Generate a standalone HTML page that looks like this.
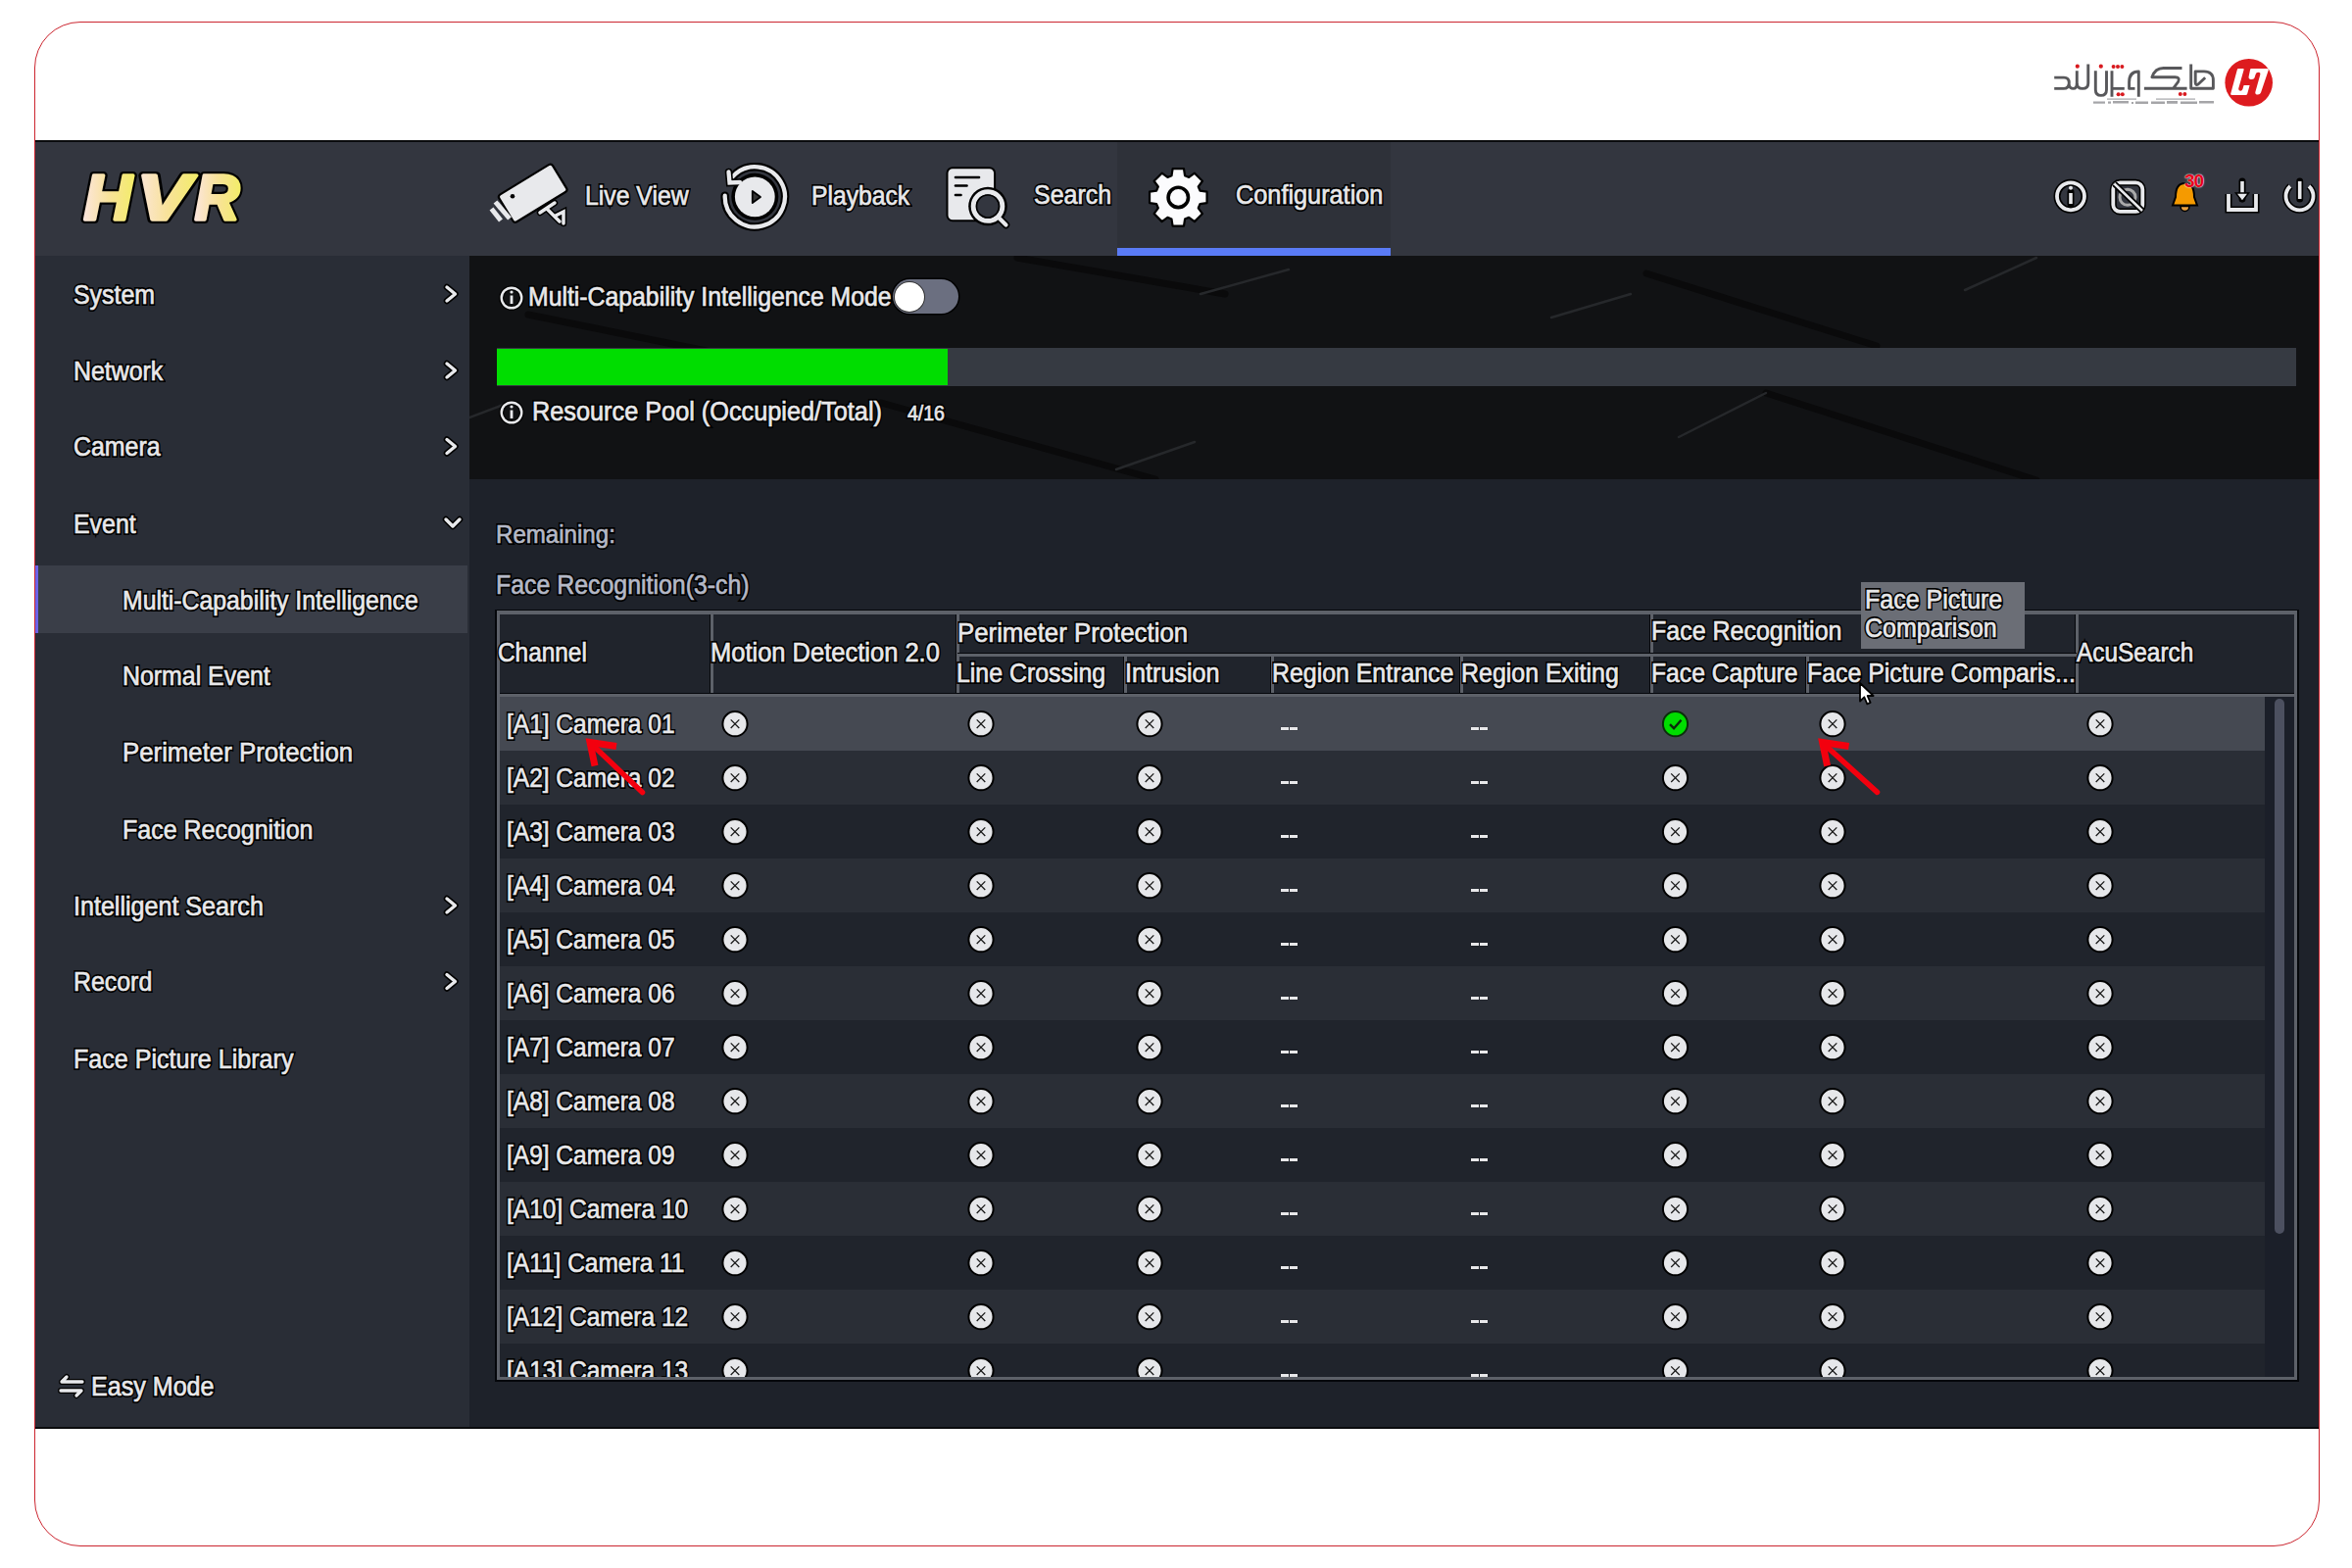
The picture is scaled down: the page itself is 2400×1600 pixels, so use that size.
<!DOCTYPE html><html><head><meta charset="utf-8"><style>
*{margin:0;padding:0;box-sizing:border-box}
html,body{width:2400px;height:1600px;overflow:hidden;background:#fff;font-family:"Liberation Sans",sans-serif}
.a{position:absolute}
.t{position:absolute;white-space:pre;line-height:1;transform:scaleX(0.907);transform-origin:0 0;}
.o{color:#000;-webkit-text-stroke:4px #000}
svg{position:absolute;overflow:visible}
</style></head><body>
<div class="a" style="left:35px;top:143px;width:2331px;height:1315px;background:#0a0b0d;"></div>
<div class="a" style="left:35px;top:145px;width:2331px;height:116px;background:#33363f;"></div>
<div class="a" style="left:35px;top:261px;width:444px;height:1195px;background:#292d36;"></div>
<div class="a" style="left:1140px;top:145px;width:279px;height:108px;background:#2e3139;"></div>
<div class="a" style="left:1140px;top:253px;width:279px;height:8px;background:#5a7bf6;"></div>
<div class="a" style="left:479px;top:261px;width:1887px;height:1195px;background:#1e222a;"></div>
<div class="a" style="left:479px;top:261px;width:1887px;height:228px;background:#111214;overflow:hidden"><svg width="1887" height="228" style="left:0;top:0"><g stroke="#0a0a0b" stroke-width="7" fill="none" stroke-linecap="round"><line x1="559" y1="2" x2="771" y2="39"/><line x1="1201" y1="18" x2="1436" y2="92"/><line x1="1323" y1="140" x2="1599" y2="229"/><line x1="60" y1="60" x2="330" y2="115"/><line x1="420" y1="150" x2="700" y2="228"/></g><g stroke="#26282b" stroke-width="2.5" fill="none" stroke-linecap="round"><line x1="746" y1="39" x2="836" y2="14"/><line x1="1104" y1="63" x2="1185" y2="39"/><line x1="1526" y1="35" x2="1599" y2="2"/><line x1="1234" y1="185" x2="1323" y2="140"/><line x1="0" y1="165" x2="40" y2="150"/><line x1="660" y1="218" x2="740" y2="190"/></g></svg></div>
<svg width="200" height="80" style="left:70px;top:160px" viewBox="70 160 200 80">
<defs><linearGradient id="g1" x1="0" x2="1" y1="0" y2="0"><stop offset="0" stop-color="#fce6dc"/><stop offset="0.5" stop-color="#f8e29a"/><stop offset="1" stop-color="#f3ec6a"/></linearGradient></defs>
<g font-family="Liberation Sans" font-weight="bold" font-style="italic" font-size="64">
<g stroke="#000" stroke-width="8" stroke-linejoin="round" fill="#000">
<text x="85.5" y="224" textLength="49" lengthAdjust="spacingAndGlyphs">H</text><text x="139.5" y="224" textLength="55" lengthAdjust="spacingAndGlyphs">V</text><text x="198.8" y="224" textLength="45.5" lengthAdjust="spacingAndGlyphs">R</text></g>
<g stroke="url(#g1)" stroke-width="3.5" stroke-linejoin="round" fill="url(#g1)">
<text x="85.5" y="224" textLength="49" lengthAdjust="spacingAndGlyphs">H</text><text x="139.5" y="224" textLength="55" lengthAdjust="spacingAndGlyphs">V</text><text x="198.8" y="224" textLength="45.5" lengthAdjust="spacingAndGlyphs">R</text></g>
</g></svg>
<svg width="100" height="80" style="left:490px;top:160px" viewBox="490 160 100 80">
<g stroke="#000" stroke-width="2.2" stroke-linejoin="round">
<g transform="rotate(-31.4 543.7 197.2)"><rect x="511.7" y="180.9" width="64" height="32.6" rx="3" fill="#e8e9ec"/></g>
<line x1="505.5" y1="206" x2="520" y2="223" stroke="#e8e9ec" stroke-width="5"/>
<line x1="501.5" y1="213" x2="511" y2="225" stroke="#e8e9ec" stroke-width="5"/>
</g>
<path d="M566 207 L551 217 M558 213 L571 226 M567 220 L575 216 L575 228" stroke="#000" stroke-width="6.5" fill="none" stroke-linecap="round"/>
<path d="M566 207 L551 217 M558 213 L571 226 M567 220 L575 216 L575 228" stroke="#e8e9ec" stroke-width="3.5" fill="none" stroke-linecap="round"/>
<circle cx="523" cy="200.3" r="2.3" fill="#000"/>
</svg>
<div class="t o" style="left:597.2px;top:185.5px;font-size:27.34px;">Live View</div><div class="t" style="left:597.2px;top:185.5px;font-size:27.34px;color:#e8e8ea;-webkit-text-stroke:0.7px #e8e8ea">Live View</div>
<svg width="80" height="80" style="left:730px;top:160px" viewBox="730 160 80 80">
<circle cx="770.3" cy="200.8" r="24" fill="#000"/>
<path d="M747.56 180.32 A30.6 30.6 0 1 1 739.72 199.73" fill="none" stroke="#000" stroke-width="8.5" stroke-linecap="round"/>
<path d="M747.56 180.32 A30.6 30.6 0 1 1 739.72 199.73" fill="none" stroke="#e8e9ec" stroke-width="4.3" stroke-linecap="round"/>
<path d="M743.5 175.5 L744.5 186.5 L755 186" fill="none" stroke="#000" stroke-width="7.5" stroke-linejoin="miter" stroke-linecap="round"/>
<path d="M743.5 175.5 L744.5 186.5 L755 186" fill="none" stroke="#e8e9ec" stroke-width="4.3" stroke-linejoin="miter" stroke-linecap="round"/>
<circle cx="770.3" cy="200.8" r="20.4" fill="#e8e9ec"/>
<path d="M767.8 195 L767.8 207 L776 201 Z" fill="#333" stroke="#000" stroke-width="1.8" stroke-linejoin="round"/>
</svg>
<div class="t o" style="left:828.2px;top:185.5px;font-size:27.23px;">Playback</div><div class="t" style="left:828.2px;top:185.5px;font-size:27.23px;color:#e8e8ea;-webkit-text-stroke:0.7px #e8e8ea">Playback</div>
<svg width="80" height="80" style="left:960px;top:160px" viewBox="960 160 80 80">
<rect x="966.5" y="171.2" width="48.6" height="54" rx="5.5" fill="#e8e9ec" stroke="#000" stroke-width="2"/>
<g stroke="#000" stroke-width="2.6" stroke-linecap="round"><line x1="975" y1="181" x2="999" y2="181"/><line x1="975" y1="189.5" x2="986.5" y2="189.5"/><line x1="975" y1="199" x2="980.5" y2="199"/></g>
<circle cx="1008" cy="210.5" r="19.8" fill="#000"/>
<line x1="1019" y1="222" x2="1026.5" y2="229.5" stroke="#000" stroke-width="7.5" stroke-linecap="round"/>
<line x1="1019" y1="222" x2="1026.5" y2="229.5" stroke="#e8e9ec" stroke-width="4.2" stroke-linecap="round"/>
<circle cx="1008" cy="210.5" r="14.8" fill="#33363f" stroke="#e8e9ec" stroke-width="5"/>
<circle cx="1008" cy="210.5" r="11.5" fill="none" stroke="#000" stroke-width="1.6"/>
</svg>
<div class="t o" style="left:1055.2px;top:185.3px;font-size:27.56px;">Search</div><div class="t" style="left:1055.2px;top:185.3px;font-size:27.56px;color:#e8e8ea;-webkit-text-stroke:0.7px #e8e8ea">Search</div>
<svg width="80" height="80" style="left:1162px;top:161px" viewBox="1162 161 80 80">
<polygon points="1195.52,179.21 1196.61,172.15 1207.99,172.15 1209.08,179.21 1213.19,180.92 1218.96,176.69 1227.01,184.74 1222.78,190.51 1224.49,194.62 1231.55,195.71 1231.55,207.09 1224.49,208.18 1222.78,212.29 1227.01,218.06 1218.96,226.11 1213.19,221.88 1209.08,223.59 1207.99,230.65 1196.61,230.65 1195.52,223.59 1191.41,221.88 1185.64,226.11 1177.59,218.06 1181.82,212.29 1180.11,208.18 1173.05,207.09 1173.05,195.71 1180.11,194.62 1181.82,190.51 1177.59,184.74 1185.64,176.69 1191.41,180.92" fill="#fbfbfd" stroke="#000" stroke-width="2.2" stroke-linejoin="round"/>
<circle cx="1202.3" cy="201.4" r="10.2" fill="#fbfbfd" stroke="#000" stroke-width="3.6"/>
</svg>
<div class="t o" style="left:1260.7px;top:185.0px;font-size:27.89px;">Configuration</div><div class="t" style="left:1260.7px;top:185.0px;font-size:27.89px;color:#e8e8ea;-webkit-text-stroke:0.7px #e8e8ea">Configuration</div>
<svg width="260" height="60" style="left:2090px;top:170px" viewBox="2090 170 260 60">
<g fill="none" stroke="#000" stroke-width="7">
<circle cx="2113" cy="200.3" r="14"/>
<rect x="2156.3" y="186.3" width="30" height="29.6" rx="7"/>
<path d="M2274 198 V214 H2302 V198"/>
<path d="M2337 190 A14 14 0 1 0 2356 190"/>
</g>
<g fill="none" stroke="#e8e9ec" stroke-width="3.8">
<circle cx="2113" cy="200.3" r="14"/>
<rect x="2156.3" y="186.3" width="30" height="29.6" rx="7"/>
<path d="M2274 198 V214 H2302 V198"/>
<path d="M2337 190 A14 14 0 1 0 2356 190"/>
</g>
<g stroke="#000" stroke-width="7" stroke-linecap="round"><line x1="2113" y1="196" x2="2113" y2="208"/><line x1="2346.7" y1="185" x2="2346.7" y2="203"/><line x1="2288" y1="185" x2="2288" y2="203"/></g>
<g stroke="#e8e9ec" stroke-width="3.6" stroke-linecap="butt"><line x1="2113" y1="197" x2="2113" y2="208"/><line x1="2346.7" y1="185" x2="2346.7" y2="203"/><line x1="2288" y1="185" x2="2288" y2="200"/></g>
<circle cx="2113" cy="191.8" r="2" fill="#e8e9ec"/>
<path d="M2281.5 197 L2288 205.5 L2294.5 197 Z" fill="#e8e9ec" stroke="#000" stroke-width="1.5"/>
<circle cx="2171" cy="201.3" r="8" fill="none" stroke="#aaa" stroke-width="3"/>
<line x1="2157.5" y1="187.5" x2="2186" y2="215" stroke="#000" stroke-width="6"/>
<line x1="2157.5" y1="187.5" x2="2186" y2="215" stroke="#e8e9ec" stroke-width="2.5"/>
<path d="M2229.5 187 C2222 187 2220 194 2220 201 L2217 209.5 L2242 209.5 L2239 201 C2239 194 2237 187 2229.5 187 Z" fill="#f59a00" stroke="#000" stroke-width="2"/>
<path d="M2225 210.5 A4.5 5 0 0 0 2234 210.5 Z" fill="#e9a040" stroke="#000" stroke-width="1.5"/>
</svg>
<div class="a" style="left:2229px;top:175px;font:bold 19px/1 'Liberation Sans',sans-serif;color:#e8001a;letter-spacing:-1px;text-shadow:0 0 2px #fff,0 0 1px #fff">30</div>
<div class="a" style="left:35px;top:577px;width:442px;height:69px;background:#3a3e48;"></div>
<div class="a" style="left:35px;top:577px;width:4px;height:69px;background:#6b62e8;"></div>
<div class="t o" style="left:75.3px;top:286.8px;font-size:27.45px;">System</div><div class="t" style="left:75.3px;top:286.8px;font-size:27.45px;color:#e8e8ea;-webkit-text-stroke:0.7px #e8e8ea">System</div>
<div class="t o" style="left:75.3px;top:364.8px;font-size:27.45px;">Network</div><div class="t" style="left:75.3px;top:364.8px;font-size:27.45px;color:#e8e8ea;-webkit-text-stroke:0.7px #e8e8ea">Network</div>
<div class="t o" style="left:75.3px;top:442.3px;font-size:27.45px;">Camera</div><div class="t" style="left:75.3px;top:442.3px;font-size:27.45px;color:#e8e8ea;-webkit-text-stroke:0.7px #e8e8ea">Camera</div>
<div class="t o" style="left:75.3px;top:520.8px;font-size:27.45px;">Event</div><div class="t" style="left:75.3px;top:520.8px;font-size:27.45px;color:#e8e8ea;-webkit-text-stroke:0.7px #e8e8ea">Event</div>
<div class="t o" style="left:125.0px;top:598.5px;font-size:27.34px;">Multi-Capability Intelligence</div><div class="t" style="left:125.0px;top:598.5px;font-size:27.34px;color:#e8e8ea;-webkit-text-stroke:0.7px #e8e8ea">Multi-Capability Intelligence</div>
<div class="t o" style="left:125.0px;top:676.3px;font-size:27.45px;">Normal Event</div><div class="t" style="left:125.0px;top:676.3px;font-size:27.45px;color:#e8e8ea;-webkit-text-stroke:0.7px #e8e8ea">Normal Event</div>
<div class="t o" style="left:125.0px;top:753.4px;font-size:28.45px;">Perimeter Protection</div><div class="t" style="left:125.0px;top:753.4px;font-size:28.45px;color:#e8e8ea;-webkit-text-stroke:0.7px #e8e8ea">Perimeter Protection</div>
<div class="t o" style="left:125.0px;top:832.7px;font-size:27.56px;">Face Recognition</div><div class="t" style="left:125.0px;top:832.7px;font-size:27.56px;color:#e8e8ea;-webkit-text-stroke:0.7px #e8e8ea">Face Recognition</div>
<div class="t o" style="left:75.3px;top:910.6px;font-size:27.67px;">Intelligent Search</div><div class="t" style="left:75.3px;top:910.6px;font-size:27.67px;color:#e8e8ea;-webkit-text-stroke:0.7px #e8e8ea">Intelligent Search</div>
<div class="t o" style="left:75.3px;top:988.3px;font-size:27.45px;">Record</div><div class="t" style="left:75.3px;top:988.3px;font-size:27.45px;color:#e8e8ea;-webkit-text-stroke:0.7px #e8e8ea">Record</div>
<div class="t o" style="left:75.3px;top:1066.6px;font-size:27.67px;">Face Picture Library</div><div class="t" style="left:75.3px;top:1066.6px;font-size:27.67px;color:#e8e8ea;-webkit-text-stroke:0.7px #e8e8ea">Face Picture Library</div>
<svg width="30" height="1100" style="left:440px;top:0;" viewBox="440 0 30 1100"><g fill="none" stroke="#000" stroke-width="6.5" stroke-linecap="round" stroke-linejoin="round"><path d="M456 293 L464.5 300 L456 307"/><path d="M456 371 L464.5 378 L456 385"/><path d="M456 448.5 L464.5 455.5 L456 462.5"/><path d="M455 530 L462 537 L469 530"/><path d="M456 917 L464.5 924 L456 931"/><path d="M456 994.5 L464.5 1001.5 L456 1008.5"/></g><g fill="none" stroke="#e8e9ec" stroke-width="3.4" stroke-linecap="round" stroke-linejoin="round"><path d="M456 293 L464.5 300 L456 307"/><path d="M456 371 L464.5 378 L456 385"/><path d="M456 448.5 L464.5 455.5 L456 462.5"/><path d="M455 530 L462 537 L469 530"/><path d="M456 917 L464.5 924 L456 931"/><path d="M456 994.5 L464.5 1001.5 L456 1008.5"/></g></svg>
<svg width="40" height="30" style="left:55px;top:1400px" viewBox="55 1400 40 30">
<g fill="none" stroke="#000" stroke-width="6" stroke-linecap="round" stroke-linejoin="round"><path d="M84 1410 H63 L68 1405"/><path d="M62 1419 H83 L78 1424"/></g>
<g fill="none" stroke="#e8e9ec" stroke-width="3.3" stroke-linecap="round" stroke-linejoin="round"><path d="M84 1410 H63 L68 1405"/><path d="M62 1419 H83 L78 1424"/></g>
</svg>
<div class="t o" style="left:92.7px;top:1401.0px;font-size:27.67px;">Easy Mode</div><div class="t" style="left:92.7px;top:1401.0px;font-size:27.67px;color:#e8e8ea;-webkit-text-stroke:0.7px #e8e8ea">Easy Mode</div>
<svg width="30" height="30" style="left:507.29999999999995px;top:288.5px" viewBox="507.29999999999995 288.5 30 30"><circle cx="522.3" cy="303.5" r="10.3" fill="none" stroke="#000" stroke-width="5"/><circle cx="522.3" cy="303.5" r="10.3" fill="none" stroke="#e8e9ec" stroke-width="2.4"/><rect x="520.9" y="301.0" width="2.8" height="8.5" fill="#e8e9ec"/><circle cx="522.3" cy="297.5" r="1.6" fill="#e8e9ec"/></svg>
<div class="t o" style="left:539.2px;top:289.3px;font-size:27.34px;">Multi-Capability Intelligence Mode</div><div class="t" style="left:539.2px;top:289.3px;font-size:27.34px;color:#e8e8ea;-webkit-text-stroke:0.7px #e8e8ea">Multi-Capability Intelligence Mode</div>
<div class="a" style="left:911px;top:285px;width:67px;height:35px;border-radius:18px;background:#6b6f80;box-shadow:0 0 0 1.5px #000"></div>
<div class="a" style="left:913px;top:288px;width:30px;height:30px;border-radius:15px;background:#fff;box-shadow:0 0 0 1px #333"></div>
<div class="a" style="left:507px;top:355px;width:1836px;height:39px;background:#363a42;"></div>
<div class="a" style="left:507px;top:356px;width:460px;height:37px;background:#00dd00;"></div>
<svg width="30" height="30" style="left:507.29999999999995px;top:405.8px" viewBox="507.29999999999995 405.8 30 30"><circle cx="522.3" cy="420.8" r="10.3" fill="none" stroke="#000" stroke-width="5"/><circle cx="522.3" cy="420.8" r="10.3" fill="none" stroke="#e8e9ec" stroke-width="2.4"/><rect x="520.9" y="418.3" width="2.8" height="8.5" fill="#e8e9ec"/><circle cx="522.3" cy="414.8" r="1.6" fill="#e8e9ec"/></svg>
<div class="t o" style="left:543.2px;top:406.1px;font-size:27.89px;">Resource Pool (Occupied/Total)</div><div class="t" style="left:543.2px;top:406.1px;font-size:27.89px;color:#e8e8ea;-webkit-text-stroke:0.7px #e8e8ea">Resource Pool (Occupied/Total)</div>
<div class="t o" style="left:926.0px;top:411.5px;font-size:21.50px;">4/16</div><div class="t" style="left:926.0px;top:411.5px;font-size:21.50px;color:#e8e8ea;-webkit-text-stroke:0.7px #e8e8ea">4/16</div>
<div class="t o" style="left:506.2px;top:531.9px;font-size:26.57px;">Remaining:</div><div class="t" style="left:506.2px;top:531.9px;font-size:26.57px;color:#b4b8c6;-webkit-text-stroke:0.7px #b4b8c6">Remaining:</div>
<div class="t o" style="left:506.2px;top:583.3px;font-size:27.45px;">Face Recognition(3-ch)</div><div class="t" style="left:506.2px;top:583.3px;font-size:27.45px;color:#b4b8c6;-webkit-text-stroke:0.7px #b4b8c6">Face Recognition(3-ch)</div>
<div class="a" style="left:505px;top:622px;width:1841px;height:788px;background:#05070b;"></div>
<div class="a" style="left:507px;top:623px;width:1837px;height:785px;background:#5d6169;"></div>
<div class="a" style="left:510px;top:627px;width:1831px;height:778px;background:#20242c;"></div>
<div class="a" style="left:724px;top:627px;width:4px;height:84px;background:#05070b;"></div>
<div class="a" style="left:725px;top:627px;width:2.5px;height:84px;background:#5d6169;"></div>
<div class="a" style="left:975px;top:627px;width:4px;height:84px;background:#05070b;"></div>
<div class="a" style="left:976px;top:627px;width:2.5px;height:84px;background:#5d6169;"></div>
<div class="a" style="left:1683px;top:627px;width:4px;height:84px;background:#05070b;"></div>
<div class="a" style="left:1684px;top:627px;width:2.5px;height:84px;background:#5d6169;"></div>
<div class="a" style="left:2117px;top:627px;width:4px;height:84px;background:#05070b;"></div>
<div class="a" style="left:2118px;top:627px;width:2.5px;height:84px;background:#5d6169;"></div>
<div class="a" style="left:1146px;top:667px;width:4px;height:44px;background:#05070b;"></div>
<div class="a" style="left:1147px;top:667px;width:2.5px;height:44px;background:#5d6169;"></div>
<div class="a" style="left:1296px;top:667px;width:4px;height:44px;background:#05070b;"></div>
<div class="a" style="left:1297px;top:667px;width:2.5px;height:44px;background:#5d6169;"></div>
<div class="a" style="left:1489px;top:667px;width:4px;height:44px;background:#05070b;"></div>
<div class="a" style="left:1490px;top:667px;width:2.5px;height:44px;background:#5d6169;"></div>
<div class="a" style="left:1842px;top:667px;width:4px;height:44px;background:#05070b;"></div>
<div class="a" style="left:1843px;top:667px;width:2.5px;height:44px;background:#5d6169;"></div>
<div class="a" style="left:977px;top:666px;width:1142px;height:4px;background:#05070b;"></div>
<div class="a" style="left:977px;top:667px;width:1142px;height:2.5px;background:#5d6169;"></div>
<div class="a" style="left:510px;top:707px;width:1831px;height:5px;background:#05070b;"></div>
<div class="a" style="left:510px;top:708px;width:1831px;height:3px;background:#5d6169;"></div>
<div class="t o" style="left:508.2px;top:653.4px;font-size:26.90px;">Channel</div><div class="t" style="left:508.2px;top:653.4px;font-size:26.90px;color:#e8e8ea;-webkit-text-stroke:0.7px #e8e8ea">Channel</div>
<div class="t o" style="left:724.7px;top:652.4px;font-size:28.11px;">Motion Detection 2.0</div><div class="t" style="left:724.7px;top:652.4px;font-size:28.11px;color:#e8e8ea;-webkit-text-stroke:0.7px #e8e8ea">Motion Detection 2.0</div>
<div class="t o" style="left:976.7px;top:630.6px;font-size:28.45px;">Perimeter Protection</div><div class="t" style="left:976.7px;top:630.6px;font-size:28.45px;color:#e8e8ea;-webkit-text-stroke:0.7px #e8e8ea">Perimeter Protection</div>
<div class="t o" style="left:975.7px;top:673.3px;font-size:27.45px;">Line Crossing</div><div class="t" style="left:975.7px;top:673.3px;font-size:27.45px;color:#e8e8ea;-webkit-text-stroke:0.7px #e8e8ea">Line Crossing</div>
<div class="t o" style="left:1148.2px;top:673.0px;font-size:27.78px;">Intrusion</div><div class="t" style="left:1148.2px;top:673.0px;font-size:27.78px;color:#e8e8ea;-webkit-text-stroke:0.7px #e8e8ea">Intrusion</div>
<div class="t o" style="left:1298.2px;top:673.3px;font-size:27.45px;">Region Entrance</div><div class="t" style="left:1298.2px;top:673.3px;font-size:27.45px;color:#e8e8ea;-webkit-text-stroke:0.7px #e8e8ea">Region Entrance</div>
<div class="t o" style="left:1490.7px;top:673.2px;font-size:27.51px;">Region Exiting</div><div class="t" style="left:1490.7px;top:673.2px;font-size:27.51px;color:#e8e8ea;-webkit-text-stroke:0.7px #e8e8ea">Region Exiting</div>
<div class="t o" style="left:1685.2px;top:630.2px;font-size:27.56px;">Face Recognition</div><div class="t" style="left:1685.2px;top:630.2px;font-size:27.56px;color:#e8e8ea;-webkit-text-stroke:0.7px #e8e8ea">Face Recognition</div>
<div class="t o" style="left:1685.2px;top:673.4px;font-size:27.23px;">Face Capture</div><div class="t" style="left:1685.2px;top:673.4px;font-size:27.23px;color:#e8e8ea;-webkit-text-stroke:0.7px #e8e8ea">Face Capture</div>
<div class="t o" style="left:1844.2px;top:673.3px;font-size:27.45px;">Face Picture Comparis...</div><div class="t" style="left:1844.2px;top:673.3px;font-size:27.45px;color:#e8e8ea;-webkit-text-stroke:0.7px #e8e8ea">Face Picture Comparis...</div>
<div class="t o" style="left:2118.7px;top:653.4px;font-size:26.90px;">AcuSearch</div><div class="t" style="left:2118.7px;top:653.4px;font-size:26.90px;color:#e8e8ea;-webkit-text-stroke:0.7px #e8e8ea">AcuSearch</div>
<div class="a" style="left:510px;top:711px;width:1801px;height:55px;background:#454952;"></div>
<div class="a" style="left:510px;top:766px;width:1801px;height:55px;background:#2a2e36;"></div>
<div class="a" style="left:510px;top:821px;width:1801px;height:55px;background:#20242c;"></div>
<div class="a" style="left:510px;top:876px;width:1801px;height:55px;background:#2a2e36;"></div>
<div class="a" style="left:510px;top:931px;width:1801px;height:55px;background:#20242c;"></div>
<div class="a" style="left:510px;top:986px;width:1801px;height:55px;background:#2a2e36;"></div>
<div class="a" style="left:510px;top:1041px;width:1801px;height:55px;background:#20242c;"></div>
<div class="a" style="left:510px;top:1096px;width:1801px;height:55px;background:#2a2e36;"></div>
<div class="a" style="left:510px;top:1151px;width:1801px;height:55px;background:#20242c;"></div>
<div class="a" style="left:510px;top:1206px;width:1801px;height:55px;background:#2a2e36;"></div>
<div class="a" style="left:510px;top:1261px;width:1801px;height:55px;background:#20242c;"></div>
<div class="a" style="left:510px;top:1316px;width:1801px;height:55px;background:#2a2e36;"></div>
<div class="a" style="left:510px;top:1371px;width:1801px;height:34px;background:#20242c;"></div>
<div class="a" style="left:510px;top:711px;width:1801px;height:55px;overflow:hidden"><div class="t o" style="left:6.5px;top:14.6px;font-size:27.01px">[A1] Camera 01</div><div class="t" style="left:6.5px;top:14.6px;font-size:27.01px;color:#e8e8ea;-webkit-text-stroke:0.7px #e8e8ea">[A1] Camera 01</div><div class="a" style="left:797px;top:30.5px;width:7.5px;height:3px;background:#e8e8ea;box-shadow:0 0 1px #000"></div><div class="a" style="left:806px;top:30.5px;width:7.5px;height:3px;background:#e8e8ea;box-shadow:0 0 1px #000"></div><div class="a" style="left:991px;top:30.5px;width:7.5px;height:3px;background:#e8e8ea;box-shadow:0 0 1px #000"></div><div class="a" style="left:1000px;top:30.5px;width:7.5px;height:3px;background:#e8e8ea;box-shadow:0 0 1px #000"></div></div>
<div class="a" style="left:510px;top:766px;width:1801px;height:55px;overflow:hidden"><div class="t o" style="left:6.5px;top:14.6px;font-size:27.01px">[A2] Camera 02</div><div class="t" style="left:6.5px;top:14.6px;font-size:27.01px;color:#e8e8ea;-webkit-text-stroke:0.7px #e8e8ea">[A2] Camera 02</div><div class="a" style="left:797px;top:30.5px;width:7.5px;height:3px;background:#e8e8ea;box-shadow:0 0 1px #000"></div><div class="a" style="left:806px;top:30.5px;width:7.5px;height:3px;background:#e8e8ea;box-shadow:0 0 1px #000"></div><div class="a" style="left:991px;top:30.5px;width:7.5px;height:3px;background:#e8e8ea;box-shadow:0 0 1px #000"></div><div class="a" style="left:1000px;top:30.5px;width:7.5px;height:3px;background:#e8e8ea;box-shadow:0 0 1px #000"></div></div>
<div class="a" style="left:510px;top:821px;width:1801px;height:55px;overflow:hidden"><div class="t o" style="left:6.5px;top:14.6px;font-size:27.01px">[A3] Camera 03</div><div class="t" style="left:6.5px;top:14.6px;font-size:27.01px;color:#e8e8ea;-webkit-text-stroke:0.7px #e8e8ea">[A3] Camera 03</div><div class="a" style="left:797px;top:30.5px;width:7.5px;height:3px;background:#e8e8ea;box-shadow:0 0 1px #000"></div><div class="a" style="left:806px;top:30.5px;width:7.5px;height:3px;background:#e8e8ea;box-shadow:0 0 1px #000"></div><div class="a" style="left:991px;top:30.5px;width:7.5px;height:3px;background:#e8e8ea;box-shadow:0 0 1px #000"></div><div class="a" style="left:1000px;top:30.5px;width:7.5px;height:3px;background:#e8e8ea;box-shadow:0 0 1px #000"></div></div>
<div class="a" style="left:510px;top:876px;width:1801px;height:55px;overflow:hidden"><div class="t o" style="left:6.5px;top:14.6px;font-size:27.01px">[A4] Camera 04</div><div class="t" style="left:6.5px;top:14.6px;font-size:27.01px;color:#e8e8ea;-webkit-text-stroke:0.7px #e8e8ea">[A4] Camera 04</div><div class="a" style="left:797px;top:30.5px;width:7.5px;height:3px;background:#e8e8ea;box-shadow:0 0 1px #000"></div><div class="a" style="left:806px;top:30.5px;width:7.5px;height:3px;background:#e8e8ea;box-shadow:0 0 1px #000"></div><div class="a" style="left:991px;top:30.5px;width:7.5px;height:3px;background:#e8e8ea;box-shadow:0 0 1px #000"></div><div class="a" style="left:1000px;top:30.5px;width:7.5px;height:3px;background:#e8e8ea;box-shadow:0 0 1px #000"></div></div>
<div class="a" style="left:510px;top:931px;width:1801px;height:55px;overflow:hidden"><div class="t o" style="left:6.5px;top:14.6px;font-size:27.01px">[A5] Camera 05</div><div class="t" style="left:6.5px;top:14.6px;font-size:27.01px;color:#e8e8ea;-webkit-text-stroke:0.7px #e8e8ea">[A5] Camera 05</div><div class="a" style="left:797px;top:30.5px;width:7.5px;height:3px;background:#e8e8ea;box-shadow:0 0 1px #000"></div><div class="a" style="left:806px;top:30.5px;width:7.5px;height:3px;background:#e8e8ea;box-shadow:0 0 1px #000"></div><div class="a" style="left:991px;top:30.5px;width:7.5px;height:3px;background:#e8e8ea;box-shadow:0 0 1px #000"></div><div class="a" style="left:1000px;top:30.5px;width:7.5px;height:3px;background:#e8e8ea;box-shadow:0 0 1px #000"></div></div>
<div class="a" style="left:510px;top:986px;width:1801px;height:55px;overflow:hidden"><div class="t o" style="left:6.5px;top:14.6px;font-size:27.01px">[A6] Camera 06</div><div class="t" style="left:6.5px;top:14.6px;font-size:27.01px;color:#e8e8ea;-webkit-text-stroke:0.7px #e8e8ea">[A6] Camera 06</div><div class="a" style="left:797px;top:30.5px;width:7.5px;height:3px;background:#e8e8ea;box-shadow:0 0 1px #000"></div><div class="a" style="left:806px;top:30.5px;width:7.5px;height:3px;background:#e8e8ea;box-shadow:0 0 1px #000"></div><div class="a" style="left:991px;top:30.5px;width:7.5px;height:3px;background:#e8e8ea;box-shadow:0 0 1px #000"></div><div class="a" style="left:1000px;top:30.5px;width:7.5px;height:3px;background:#e8e8ea;box-shadow:0 0 1px #000"></div></div>
<div class="a" style="left:510px;top:1041px;width:1801px;height:55px;overflow:hidden"><div class="t o" style="left:6.5px;top:14.6px;font-size:27.01px">[A7] Camera 07</div><div class="t" style="left:6.5px;top:14.6px;font-size:27.01px;color:#e8e8ea;-webkit-text-stroke:0.7px #e8e8ea">[A7] Camera 07</div><div class="a" style="left:797px;top:30.5px;width:7.5px;height:3px;background:#e8e8ea;box-shadow:0 0 1px #000"></div><div class="a" style="left:806px;top:30.5px;width:7.5px;height:3px;background:#e8e8ea;box-shadow:0 0 1px #000"></div><div class="a" style="left:991px;top:30.5px;width:7.5px;height:3px;background:#e8e8ea;box-shadow:0 0 1px #000"></div><div class="a" style="left:1000px;top:30.5px;width:7.5px;height:3px;background:#e8e8ea;box-shadow:0 0 1px #000"></div></div>
<div class="a" style="left:510px;top:1096px;width:1801px;height:55px;overflow:hidden"><div class="t o" style="left:6.5px;top:14.6px;font-size:27.01px">[A8] Camera 08</div><div class="t" style="left:6.5px;top:14.6px;font-size:27.01px;color:#e8e8ea;-webkit-text-stroke:0.7px #e8e8ea">[A8] Camera 08</div><div class="a" style="left:797px;top:30.5px;width:7.5px;height:3px;background:#e8e8ea;box-shadow:0 0 1px #000"></div><div class="a" style="left:806px;top:30.5px;width:7.5px;height:3px;background:#e8e8ea;box-shadow:0 0 1px #000"></div><div class="a" style="left:991px;top:30.5px;width:7.5px;height:3px;background:#e8e8ea;box-shadow:0 0 1px #000"></div><div class="a" style="left:1000px;top:30.5px;width:7.5px;height:3px;background:#e8e8ea;box-shadow:0 0 1px #000"></div></div>
<div class="a" style="left:510px;top:1151px;width:1801px;height:55px;overflow:hidden"><div class="t o" style="left:6.5px;top:14.6px;font-size:27.01px">[A9] Camera 09</div><div class="t" style="left:6.5px;top:14.6px;font-size:27.01px;color:#e8e8ea;-webkit-text-stroke:0.7px #e8e8ea">[A9] Camera 09</div><div class="a" style="left:797px;top:30.5px;width:7.5px;height:3px;background:#e8e8ea;box-shadow:0 0 1px #000"></div><div class="a" style="left:806px;top:30.5px;width:7.5px;height:3px;background:#e8e8ea;box-shadow:0 0 1px #000"></div><div class="a" style="left:991px;top:30.5px;width:7.5px;height:3px;background:#e8e8ea;box-shadow:0 0 1px #000"></div><div class="a" style="left:1000px;top:30.5px;width:7.5px;height:3px;background:#e8e8ea;box-shadow:0 0 1px #000"></div></div>
<div class="a" style="left:510px;top:1206px;width:1801px;height:55px;overflow:hidden"><div class="t o" style="left:6.5px;top:14.6px;font-size:27.01px">[A10] Camera 10</div><div class="t" style="left:6.5px;top:14.6px;font-size:27.01px;color:#e8e8ea;-webkit-text-stroke:0.7px #e8e8ea">[A10] Camera 10</div><div class="a" style="left:797px;top:30.5px;width:7.5px;height:3px;background:#e8e8ea;box-shadow:0 0 1px #000"></div><div class="a" style="left:806px;top:30.5px;width:7.5px;height:3px;background:#e8e8ea;box-shadow:0 0 1px #000"></div><div class="a" style="left:991px;top:30.5px;width:7.5px;height:3px;background:#e8e8ea;box-shadow:0 0 1px #000"></div><div class="a" style="left:1000px;top:30.5px;width:7.5px;height:3px;background:#e8e8ea;box-shadow:0 0 1px #000"></div></div>
<div class="a" style="left:510px;top:1261px;width:1801px;height:55px;overflow:hidden"><div class="t o" style="left:6.5px;top:14.6px;font-size:27.01px">[A11] Camera 11</div><div class="t" style="left:6.5px;top:14.6px;font-size:27.01px;color:#e8e8ea;-webkit-text-stroke:0.7px #e8e8ea">[A11] Camera 11</div><div class="a" style="left:797px;top:30.5px;width:7.5px;height:3px;background:#e8e8ea;box-shadow:0 0 1px #000"></div><div class="a" style="left:806px;top:30.5px;width:7.5px;height:3px;background:#e8e8ea;box-shadow:0 0 1px #000"></div><div class="a" style="left:991px;top:30.5px;width:7.5px;height:3px;background:#e8e8ea;box-shadow:0 0 1px #000"></div><div class="a" style="left:1000px;top:30.5px;width:7.5px;height:3px;background:#e8e8ea;box-shadow:0 0 1px #000"></div></div>
<div class="a" style="left:510px;top:1316px;width:1801px;height:55px;overflow:hidden"><div class="t o" style="left:6.5px;top:14.6px;font-size:27.01px">[A12] Camera 12</div><div class="t" style="left:6.5px;top:14.6px;font-size:27.01px;color:#e8e8ea;-webkit-text-stroke:0.7px #e8e8ea">[A12] Camera 12</div><div class="a" style="left:797px;top:30.5px;width:7.5px;height:3px;background:#e8e8ea;box-shadow:0 0 1px #000"></div><div class="a" style="left:806px;top:30.5px;width:7.5px;height:3px;background:#e8e8ea;box-shadow:0 0 1px #000"></div><div class="a" style="left:991px;top:30.5px;width:7.5px;height:3px;background:#e8e8ea;box-shadow:0 0 1px #000"></div><div class="a" style="left:1000px;top:30.5px;width:7.5px;height:3px;background:#e8e8ea;box-shadow:0 0 1px #000"></div></div>
<div class="a" style="left:510px;top:1371px;width:1801px;height:34px;overflow:hidden"><div class="t o" style="left:6.5px;top:14.6px;font-size:27.01px">[A13] Camera 13</div><div class="t" style="left:6.5px;top:14.6px;font-size:27.01px;color:#e8e8ea;-webkit-text-stroke:0.7px #e8e8ea">[A13] Camera 13</div><div class="a" style="left:797px;top:30.5px;width:7.5px;height:3px;background:#e8e8ea;box-shadow:0 0 1px #000"></div><div class="a" style="left:806px;top:30.5px;width:7.5px;height:3px;background:#e8e8ea;box-shadow:0 0 1px #000"></div><div class="a" style="left:991px;top:30.5px;width:7.5px;height:3px;background:#e8e8ea;box-shadow:0 0 1px #000"></div><div class="a" style="left:1000px;top:30.5px;width:7.5px;height:3px;background:#e8e8ea;box-shadow:0 0 1px #000"></div></div>
<div class="a" style="left:0;top:711px;width:2400px;height:694px;overflow:hidden"><svg width="2400" height="1600" style="left:0;top:-711px" viewBox="0 0 2400 1600"><circle cx="750" cy="738.7" r="12.6" fill="#e6e7ea" stroke="#000" stroke-width="2"/><path d="M745.7 734.4000000000001 L754.3 743.0 M754.3 734.4000000000001 L745.7 743.0" stroke="#1a1a1a" stroke-width="1.3"/><circle cx="1001" cy="738.7" r="12.6" fill="#e6e7ea" stroke="#000" stroke-width="2"/><path d="M996.7 734.4000000000001 L1005.3 743.0 M1005.3 734.4000000000001 L996.7 743.0" stroke="#1a1a1a" stroke-width="1.3"/><circle cx="1173" cy="738.7" r="12.6" fill="#e6e7ea" stroke="#000" stroke-width="2"/><path d="M1168.7 734.4000000000001 L1177.3 743.0 M1177.3 734.4000000000001 L1168.7 743.0" stroke="#1a1a1a" stroke-width="1.3"/><circle cx="1870" cy="738.7" r="12.6" fill="#e6e7ea" stroke="#000" stroke-width="2"/><path d="M1865.7 734.4000000000001 L1874.3 743.0 M1874.3 734.4000000000001 L1865.7 743.0" stroke="#1a1a1a" stroke-width="1.3"/><circle cx="2143" cy="738.7" r="12.6" fill="#e6e7ea" stroke="#000" stroke-width="2"/><path d="M2138.7 734.4000000000001 L2147.3 743.0 M2147.3 734.4000000000001 L2138.7 743.0" stroke="#1a1a1a" stroke-width="1.3"/><circle cx="1709.5" cy="738.7" r="12.6" fill="#00dd00" stroke="#0a300a" stroke-width="2"/><path d="M1704.0 739.2 L1708.0 743.2 L1715.5 734.7" stroke="#0a2a0a" stroke-width="2.4" fill="none"/><circle cx="750" cy="793.7" r="12.6" fill="#e6e7ea" stroke="#000" stroke-width="2"/><path d="M745.7 789.4000000000001 L754.3 798.0 M754.3 789.4000000000001 L745.7 798.0" stroke="#1a1a1a" stroke-width="1.3"/><circle cx="1001" cy="793.7" r="12.6" fill="#e6e7ea" stroke="#000" stroke-width="2"/><path d="M996.7 789.4000000000001 L1005.3 798.0 M1005.3 789.4000000000001 L996.7 798.0" stroke="#1a1a1a" stroke-width="1.3"/><circle cx="1173" cy="793.7" r="12.6" fill="#e6e7ea" stroke="#000" stroke-width="2"/><path d="M1168.7 789.4000000000001 L1177.3 798.0 M1177.3 789.4000000000001 L1168.7 798.0" stroke="#1a1a1a" stroke-width="1.3"/><circle cx="1870" cy="793.7" r="12.6" fill="#e6e7ea" stroke="#000" stroke-width="2"/><path d="M1865.7 789.4000000000001 L1874.3 798.0 M1874.3 789.4000000000001 L1865.7 798.0" stroke="#1a1a1a" stroke-width="1.3"/><circle cx="2143" cy="793.7" r="12.6" fill="#e6e7ea" stroke="#000" stroke-width="2"/><path d="M2138.7 789.4000000000001 L2147.3 798.0 M2147.3 789.4000000000001 L2138.7 798.0" stroke="#1a1a1a" stroke-width="1.3"/><circle cx="1709.5" cy="793.7" r="12.6" fill="#e6e7ea" stroke="#000" stroke-width="2"/><path d="M1705.2 789.4000000000001 L1713.8 798.0 M1713.8 789.4000000000001 L1705.2 798.0" stroke="#1a1a1a" stroke-width="1.3"/><circle cx="750" cy="848.7" r="12.6" fill="#e6e7ea" stroke="#000" stroke-width="2"/><path d="M745.7 844.4000000000001 L754.3 853.0 M754.3 844.4000000000001 L745.7 853.0" stroke="#1a1a1a" stroke-width="1.3"/><circle cx="1001" cy="848.7" r="12.6" fill="#e6e7ea" stroke="#000" stroke-width="2"/><path d="M996.7 844.4000000000001 L1005.3 853.0 M1005.3 844.4000000000001 L996.7 853.0" stroke="#1a1a1a" stroke-width="1.3"/><circle cx="1173" cy="848.7" r="12.6" fill="#e6e7ea" stroke="#000" stroke-width="2"/><path d="M1168.7 844.4000000000001 L1177.3 853.0 M1177.3 844.4000000000001 L1168.7 853.0" stroke="#1a1a1a" stroke-width="1.3"/><circle cx="1870" cy="848.7" r="12.6" fill="#e6e7ea" stroke="#000" stroke-width="2"/><path d="M1865.7 844.4000000000001 L1874.3 853.0 M1874.3 844.4000000000001 L1865.7 853.0" stroke="#1a1a1a" stroke-width="1.3"/><circle cx="2143" cy="848.7" r="12.6" fill="#e6e7ea" stroke="#000" stroke-width="2"/><path d="M2138.7 844.4000000000001 L2147.3 853.0 M2147.3 844.4000000000001 L2138.7 853.0" stroke="#1a1a1a" stroke-width="1.3"/><circle cx="1709.5" cy="848.7" r="12.6" fill="#e6e7ea" stroke="#000" stroke-width="2"/><path d="M1705.2 844.4000000000001 L1713.8 853.0 M1713.8 844.4000000000001 L1705.2 853.0" stroke="#1a1a1a" stroke-width="1.3"/><circle cx="750" cy="903.7" r="12.6" fill="#e6e7ea" stroke="#000" stroke-width="2"/><path d="M745.7 899.4000000000001 L754.3 908.0 M754.3 899.4000000000001 L745.7 908.0" stroke="#1a1a1a" stroke-width="1.3"/><circle cx="1001" cy="903.7" r="12.6" fill="#e6e7ea" stroke="#000" stroke-width="2"/><path d="M996.7 899.4000000000001 L1005.3 908.0 M1005.3 899.4000000000001 L996.7 908.0" stroke="#1a1a1a" stroke-width="1.3"/><circle cx="1173" cy="903.7" r="12.6" fill="#e6e7ea" stroke="#000" stroke-width="2"/><path d="M1168.7 899.4000000000001 L1177.3 908.0 M1177.3 899.4000000000001 L1168.7 908.0" stroke="#1a1a1a" stroke-width="1.3"/><circle cx="1870" cy="903.7" r="12.6" fill="#e6e7ea" stroke="#000" stroke-width="2"/><path d="M1865.7 899.4000000000001 L1874.3 908.0 M1874.3 899.4000000000001 L1865.7 908.0" stroke="#1a1a1a" stroke-width="1.3"/><circle cx="2143" cy="903.7" r="12.6" fill="#e6e7ea" stroke="#000" stroke-width="2"/><path d="M2138.7 899.4000000000001 L2147.3 908.0 M2147.3 899.4000000000001 L2138.7 908.0" stroke="#1a1a1a" stroke-width="1.3"/><circle cx="1709.5" cy="903.7" r="12.6" fill="#e6e7ea" stroke="#000" stroke-width="2"/><path d="M1705.2 899.4000000000001 L1713.8 908.0 M1713.8 899.4000000000001 L1705.2 908.0" stroke="#1a1a1a" stroke-width="1.3"/><circle cx="750" cy="958.7" r="12.6" fill="#e6e7ea" stroke="#000" stroke-width="2"/><path d="M745.7 954.4000000000001 L754.3 963.0 M754.3 954.4000000000001 L745.7 963.0" stroke="#1a1a1a" stroke-width="1.3"/><circle cx="1001" cy="958.7" r="12.6" fill="#e6e7ea" stroke="#000" stroke-width="2"/><path d="M996.7 954.4000000000001 L1005.3 963.0 M1005.3 954.4000000000001 L996.7 963.0" stroke="#1a1a1a" stroke-width="1.3"/><circle cx="1173" cy="958.7" r="12.6" fill="#e6e7ea" stroke="#000" stroke-width="2"/><path d="M1168.7 954.4000000000001 L1177.3 963.0 M1177.3 954.4000000000001 L1168.7 963.0" stroke="#1a1a1a" stroke-width="1.3"/><circle cx="1870" cy="958.7" r="12.6" fill="#e6e7ea" stroke="#000" stroke-width="2"/><path d="M1865.7 954.4000000000001 L1874.3 963.0 M1874.3 954.4000000000001 L1865.7 963.0" stroke="#1a1a1a" stroke-width="1.3"/><circle cx="2143" cy="958.7" r="12.6" fill="#e6e7ea" stroke="#000" stroke-width="2"/><path d="M2138.7 954.4000000000001 L2147.3 963.0 M2147.3 954.4000000000001 L2138.7 963.0" stroke="#1a1a1a" stroke-width="1.3"/><circle cx="1709.5" cy="958.7" r="12.6" fill="#e6e7ea" stroke="#000" stroke-width="2"/><path d="M1705.2 954.4000000000001 L1713.8 963.0 M1713.8 954.4000000000001 L1705.2 963.0" stroke="#1a1a1a" stroke-width="1.3"/><circle cx="750" cy="1013.7" r="12.6" fill="#e6e7ea" stroke="#000" stroke-width="2"/><path d="M745.7 1009.4000000000001 L754.3 1018.0 M754.3 1009.4000000000001 L745.7 1018.0" stroke="#1a1a1a" stroke-width="1.3"/><circle cx="1001" cy="1013.7" r="12.6" fill="#e6e7ea" stroke="#000" stroke-width="2"/><path d="M996.7 1009.4000000000001 L1005.3 1018.0 M1005.3 1009.4000000000001 L996.7 1018.0" stroke="#1a1a1a" stroke-width="1.3"/><circle cx="1173" cy="1013.7" r="12.6" fill="#e6e7ea" stroke="#000" stroke-width="2"/><path d="M1168.7 1009.4000000000001 L1177.3 1018.0 M1177.3 1009.4000000000001 L1168.7 1018.0" stroke="#1a1a1a" stroke-width="1.3"/><circle cx="1870" cy="1013.7" r="12.6" fill="#e6e7ea" stroke="#000" stroke-width="2"/><path d="M1865.7 1009.4000000000001 L1874.3 1018.0 M1874.3 1009.4000000000001 L1865.7 1018.0" stroke="#1a1a1a" stroke-width="1.3"/><circle cx="2143" cy="1013.7" r="12.6" fill="#e6e7ea" stroke="#000" stroke-width="2"/><path d="M2138.7 1009.4000000000001 L2147.3 1018.0 M2147.3 1009.4000000000001 L2138.7 1018.0" stroke="#1a1a1a" stroke-width="1.3"/><circle cx="1709.5" cy="1013.7" r="12.6" fill="#e6e7ea" stroke="#000" stroke-width="2"/><path d="M1705.2 1009.4000000000001 L1713.8 1018.0 M1713.8 1009.4000000000001 L1705.2 1018.0" stroke="#1a1a1a" stroke-width="1.3"/><circle cx="750" cy="1068.7" r="12.6" fill="#e6e7ea" stroke="#000" stroke-width="2"/><path d="M745.7 1064.4 L754.3 1073.0 M754.3 1064.4 L745.7 1073.0" stroke="#1a1a1a" stroke-width="1.3"/><circle cx="1001" cy="1068.7" r="12.6" fill="#e6e7ea" stroke="#000" stroke-width="2"/><path d="M996.7 1064.4 L1005.3 1073.0 M1005.3 1064.4 L996.7 1073.0" stroke="#1a1a1a" stroke-width="1.3"/><circle cx="1173" cy="1068.7" r="12.6" fill="#e6e7ea" stroke="#000" stroke-width="2"/><path d="M1168.7 1064.4 L1177.3 1073.0 M1177.3 1064.4 L1168.7 1073.0" stroke="#1a1a1a" stroke-width="1.3"/><circle cx="1870" cy="1068.7" r="12.6" fill="#e6e7ea" stroke="#000" stroke-width="2"/><path d="M1865.7 1064.4 L1874.3 1073.0 M1874.3 1064.4 L1865.7 1073.0" stroke="#1a1a1a" stroke-width="1.3"/><circle cx="2143" cy="1068.7" r="12.6" fill="#e6e7ea" stroke="#000" stroke-width="2"/><path d="M2138.7 1064.4 L2147.3 1073.0 M2147.3 1064.4 L2138.7 1073.0" stroke="#1a1a1a" stroke-width="1.3"/><circle cx="1709.5" cy="1068.7" r="12.6" fill="#e6e7ea" stroke="#000" stroke-width="2"/><path d="M1705.2 1064.4 L1713.8 1073.0 M1713.8 1064.4 L1705.2 1073.0" stroke="#1a1a1a" stroke-width="1.3"/><circle cx="750" cy="1123.7" r="12.6" fill="#e6e7ea" stroke="#000" stroke-width="2"/><path d="M745.7 1119.4 L754.3 1128.0 M754.3 1119.4 L745.7 1128.0" stroke="#1a1a1a" stroke-width="1.3"/><circle cx="1001" cy="1123.7" r="12.6" fill="#e6e7ea" stroke="#000" stroke-width="2"/><path d="M996.7 1119.4 L1005.3 1128.0 M1005.3 1119.4 L996.7 1128.0" stroke="#1a1a1a" stroke-width="1.3"/><circle cx="1173" cy="1123.7" r="12.6" fill="#e6e7ea" stroke="#000" stroke-width="2"/><path d="M1168.7 1119.4 L1177.3 1128.0 M1177.3 1119.4 L1168.7 1128.0" stroke="#1a1a1a" stroke-width="1.3"/><circle cx="1870" cy="1123.7" r="12.6" fill="#e6e7ea" stroke="#000" stroke-width="2"/><path d="M1865.7 1119.4 L1874.3 1128.0 M1874.3 1119.4 L1865.7 1128.0" stroke="#1a1a1a" stroke-width="1.3"/><circle cx="2143" cy="1123.7" r="12.6" fill="#e6e7ea" stroke="#000" stroke-width="2"/><path d="M2138.7 1119.4 L2147.3 1128.0 M2147.3 1119.4 L2138.7 1128.0" stroke="#1a1a1a" stroke-width="1.3"/><circle cx="1709.5" cy="1123.7" r="12.6" fill="#e6e7ea" stroke="#000" stroke-width="2"/><path d="M1705.2 1119.4 L1713.8 1128.0 M1713.8 1119.4 L1705.2 1128.0" stroke="#1a1a1a" stroke-width="1.3"/><circle cx="750" cy="1178.7" r="12.6" fill="#e6e7ea" stroke="#000" stroke-width="2"/><path d="M745.7 1174.4 L754.3 1183.0 M754.3 1174.4 L745.7 1183.0" stroke="#1a1a1a" stroke-width="1.3"/><circle cx="1001" cy="1178.7" r="12.6" fill="#e6e7ea" stroke="#000" stroke-width="2"/><path d="M996.7 1174.4 L1005.3 1183.0 M1005.3 1174.4 L996.7 1183.0" stroke="#1a1a1a" stroke-width="1.3"/><circle cx="1173" cy="1178.7" r="12.6" fill="#e6e7ea" stroke="#000" stroke-width="2"/><path d="M1168.7 1174.4 L1177.3 1183.0 M1177.3 1174.4 L1168.7 1183.0" stroke="#1a1a1a" stroke-width="1.3"/><circle cx="1870" cy="1178.7" r="12.6" fill="#e6e7ea" stroke="#000" stroke-width="2"/><path d="M1865.7 1174.4 L1874.3 1183.0 M1874.3 1174.4 L1865.7 1183.0" stroke="#1a1a1a" stroke-width="1.3"/><circle cx="2143" cy="1178.7" r="12.6" fill="#e6e7ea" stroke="#000" stroke-width="2"/><path d="M2138.7 1174.4 L2147.3 1183.0 M2147.3 1174.4 L2138.7 1183.0" stroke="#1a1a1a" stroke-width="1.3"/><circle cx="1709.5" cy="1178.7" r="12.6" fill="#e6e7ea" stroke="#000" stroke-width="2"/><path d="M1705.2 1174.4 L1713.8 1183.0 M1713.8 1174.4 L1705.2 1183.0" stroke="#1a1a1a" stroke-width="1.3"/><circle cx="750" cy="1233.7" r="12.6" fill="#e6e7ea" stroke="#000" stroke-width="2"/><path d="M745.7 1229.4 L754.3 1238.0 M754.3 1229.4 L745.7 1238.0" stroke="#1a1a1a" stroke-width="1.3"/><circle cx="1001" cy="1233.7" r="12.6" fill="#e6e7ea" stroke="#000" stroke-width="2"/><path d="M996.7 1229.4 L1005.3 1238.0 M1005.3 1229.4 L996.7 1238.0" stroke="#1a1a1a" stroke-width="1.3"/><circle cx="1173" cy="1233.7" r="12.6" fill="#e6e7ea" stroke="#000" stroke-width="2"/><path d="M1168.7 1229.4 L1177.3 1238.0 M1177.3 1229.4 L1168.7 1238.0" stroke="#1a1a1a" stroke-width="1.3"/><circle cx="1870" cy="1233.7" r="12.6" fill="#e6e7ea" stroke="#000" stroke-width="2"/><path d="M1865.7 1229.4 L1874.3 1238.0 M1874.3 1229.4 L1865.7 1238.0" stroke="#1a1a1a" stroke-width="1.3"/><circle cx="2143" cy="1233.7" r="12.6" fill="#e6e7ea" stroke="#000" stroke-width="2"/><path d="M2138.7 1229.4 L2147.3 1238.0 M2147.3 1229.4 L2138.7 1238.0" stroke="#1a1a1a" stroke-width="1.3"/><circle cx="1709.5" cy="1233.7" r="12.6" fill="#e6e7ea" stroke="#000" stroke-width="2"/><path d="M1705.2 1229.4 L1713.8 1238.0 M1713.8 1229.4 L1705.2 1238.0" stroke="#1a1a1a" stroke-width="1.3"/><circle cx="750" cy="1288.7" r="12.6" fill="#e6e7ea" stroke="#000" stroke-width="2"/><path d="M745.7 1284.4 L754.3 1293.0 M754.3 1284.4 L745.7 1293.0" stroke="#1a1a1a" stroke-width="1.3"/><circle cx="1001" cy="1288.7" r="12.6" fill="#e6e7ea" stroke="#000" stroke-width="2"/><path d="M996.7 1284.4 L1005.3 1293.0 M1005.3 1284.4 L996.7 1293.0" stroke="#1a1a1a" stroke-width="1.3"/><circle cx="1173" cy="1288.7" r="12.6" fill="#e6e7ea" stroke="#000" stroke-width="2"/><path d="M1168.7 1284.4 L1177.3 1293.0 M1177.3 1284.4 L1168.7 1293.0" stroke="#1a1a1a" stroke-width="1.3"/><circle cx="1870" cy="1288.7" r="12.6" fill="#e6e7ea" stroke="#000" stroke-width="2"/><path d="M1865.7 1284.4 L1874.3 1293.0 M1874.3 1284.4 L1865.7 1293.0" stroke="#1a1a1a" stroke-width="1.3"/><circle cx="2143" cy="1288.7" r="12.6" fill="#e6e7ea" stroke="#000" stroke-width="2"/><path d="M2138.7 1284.4 L2147.3 1293.0 M2147.3 1284.4 L2138.7 1293.0" stroke="#1a1a1a" stroke-width="1.3"/><circle cx="1709.5" cy="1288.7" r="12.6" fill="#e6e7ea" stroke="#000" stroke-width="2"/><path d="M1705.2 1284.4 L1713.8 1293.0 M1713.8 1284.4 L1705.2 1293.0" stroke="#1a1a1a" stroke-width="1.3"/><circle cx="750" cy="1343.7" r="12.6" fill="#e6e7ea" stroke="#000" stroke-width="2"/><path d="M745.7 1339.4 L754.3 1348.0 M754.3 1339.4 L745.7 1348.0" stroke="#1a1a1a" stroke-width="1.3"/><circle cx="1001" cy="1343.7" r="12.6" fill="#e6e7ea" stroke="#000" stroke-width="2"/><path d="M996.7 1339.4 L1005.3 1348.0 M1005.3 1339.4 L996.7 1348.0" stroke="#1a1a1a" stroke-width="1.3"/><circle cx="1173" cy="1343.7" r="12.6" fill="#e6e7ea" stroke="#000" stroke-width="2"/><path d="M1168.7 1339.4 L1177.3 1348.0 M1177.3 1339.4 L1168.7 1348.0" stroke="#1a1a1a" stroke-width="1.3"/><circle cx="1870" cy="1343.7" r="12.6" fill="#e6e7ea" stroke="#000" stroke-width="2"/><path d="M1865.7 1339.4 L1874.3 1348.0 M1874.3 1339.4 L1865.7 1348.0" stroke="#1a1a1a" stroke-width="1.3"/><circle cx="2143" cy="1343.7" r="12.6" fill="#e6e7ea" stroke="#000" stroke-width="2"/><path d="M2138.7 1339.4 L2147.3 1348.0 M2147.3 1339.4 L2138.7 1348.0" stroke="#1a1a1a" stroke-width="1.3"/><circle cx="1709.5" cy="1343.7" r="12.6" fill="#e6e7ea" stroke="#000" stroke-width="2"/><path d="M1705.2 1339.4 L1713.8 1348.0 M1713.8 1339.4 L1705.2 1348.0" stroke="#1a1a1a" stroke-width="1.3"/><circle cx="750" cy="1398.7" r="12.6" fill="#e6e7ea" stroke="#000" stroke-width="2"/><path d="M745.7 1394.4 L754.3 1403.0 M754.3 1394.4 L745.7 1403.0" stroke="#1a1a1a" stroke-width="1.3"/><circle cx="1001" cy="1398.7" r="12.6" fill="#e6e7ea" stroke="#000" stroke-width="2"/><path d="M996.7 1394.4 L1005.3 1403.0 M1005.3 1394.4 L996.7 1403.0" stroke="#1a1a1a" stroke-width="1.3"/><circle cx="1173" cy="1398.7" r="12.6" fill="#e6e7ea" stroke="#000" stroke-width="2"/><path d="M1168.7 1394.4 L1177.3 1403.0 M1177.3 1394.4 L1168.7 1403.0" stroke="#1a1a1a" stroke-width="1.3"/><circle cx="1870" cy="1398.7" r="12.6" fill="#e6e7ea" stroke="#000" stroke-width="2"/><path d="M1865.7 1394.4 L1874.3 1403.0 M1874.3 1394.4 L1865.7 1403.0" stroke="#1a1a1a" stroke-width="1.3"/><circle cx="2143" cy="1398.7" r="12.6" fill="#e6e7ea" stroke="#000" stroke-width="2"/><path d="M2138.7 1394.4 L2147.3 1403.0 M2147.3 1394.4 L2138.7 1403.0" stroke="#1a1a1a" stroke-width="1.3"/><circle cx="1709.5" cy="1398.7" r="12.6" fill="#e6e7ea" stroke="#000" stroke-width="2"/><path d="M1705.2 1394.4 L1713.8 1403.0 M1713.8 1394.4 L1705.2 1403.0" stroke="#1a1a1a" stroke-width="1.3"/></svg></div>
<div class="a" style="left:2311px;top:711px;width:30px;height:694px;background:#1b1f29;"></div>
<div class="a" style="left:2321px;top:713px;width:10px;height:546px;background:#4c5060;border-radius:5px;"></div>
<div class="a" style="left:1899px;top:594px;width:167px;height:68px;background:#6b6e76;"></div>
<div class="t o" style="left:1902.7px;top:597.7px;font-size:27.56px;">Face Picture</div><div class="t" style="left:1902.7px;top:597.7px;font-size:27.56px;color:#e8e8ea;-webkit-text-stroke:0.7px #e8e8ea">Face Picture</div>
<div class="t o" style="left:1902.7px;top:627.1px;font-size:27.56px;">Comparison</div><div class="t" style="left:1902.7px;top:627.1px;font-size:27.56px;color:#e8e8ea;-webkit-text-stroke:0.7px #e8e8ea">Comparison</div>
<svg width="24" height="28" style="left:1894.4px;top:694.4px" viewBox="0 0 24 28">
<path d="M4 3 L4 21.5 L8.3 17.3 L11.3 24.3 L14.6 22.9 L11.6 16 L17.6 16 Z" fill="#fff" stroke="#000" stroke-width="1.8" stroke-linejoin="round"/></svg>
<svg width="2400" height="1600" style="left:0;top:0" viewBox="0 0 2400 1600"><line x1="606" y1="761.5" x2="655.5" y2="808.5" stroke="#f3000e" stroke-width="5.5" stroke-linecap="round"/><path d="M629 761.5 L602 757.5 L607 781.5" fill="none" stroke="#f3000e" stroke-width="7" stroke-linejoin="miter" stroke-linecap="butt"/></svg>
<svg width="2400" height="1600" style="left:0;top:0" viewBox="0 0 2400 1600"><line x1="1863.6" y1="761.5" x2="1915.5" y2="808.4" stroke="#f3000e" stroke-width="5.5" stroke-linecap="round"/><path d="M1886.6 761.5 L1859.6 757.5 L1864.6 781.5" fill="none" stroke="#f3000e" stroke-width="7" stroke-linejoin="miter" stroke-linecap="butt"/></svg>
<svg width="300" height="90" style="left:2060px;top:40px" viewBox="2060 40 300 90">
<circle cx="2294.7" cy="84.3" r="24.3" fill="#dd1b1f"/>
<path d="M2284 70 H2288.8 Q2290 70 2289.6 71.3 L2284.3 90 Q2283.8 92.8 2286.3 92.8 Q2287.8 92.8 2288.4 91 L2289.6 87 H2295.6 L2293.2 95.8 Q2292.8 97 2291.5 97 H2277.5 Q2275.8 97 2276.3 95.3 L2282.8 71.2 Q2283.1 70 2284 70 Z" fill="#fff"/>
<path d="M2297 70 H2313.8 Q2315.2 70 2314.8 71.4 L2307 94.5 Q2306.2 96.6 2304 96.6 Q2300.6 96.6 2301.4 93.8 L2306.3 76.2 Q2306.8 73.8 2304.4 73.8 Q2302.2 73.8 2301.6 76 L2300.6 79.3 Q2300.1 81 2297.8 81 Q2294 81 2294.6 78.2 L2296 71.4 Q2296.3 70 2297 70 Z" fill="#fff"/>
<g fill="none" stroke="#58585b" stroke-width="2.9" stroke-linecap="butt" stroke-linejoin="round">
<path d="M2096.2 79.1 H2106 Q2111.3 79.1 2111.3 84.5 Q2111.3 90.4 2105.5 90.4 H2096.2"/>
<path d="M2111 86 Q2112 90.4 2115.5 90.4 Q2119.3 90.4 2119.3 85 V72.3"/>
<path d="M2119.3 85 Q2119.3 90.4 2125 90.4 Q2130.8 90.4 2130.8 85 V65.5"/>
<path d="M2138.3 72.3 V91.5 Q2138.3 97.4 2143.9 97.4 Q2149.5 97.4 2149.5 91.5 V72.3"/>
<path d="M2155 72.3 V98.7 M2155 90.4 H2167.8"/>
<path d="M2182.3 98.8 V73 Q2172.6 73 2172.6 84 V90.4 H2178.5"/>
<path d="M2187.9 90.3 H2231.6 M2217.5 90.3 L2222.6 83.5 Q2225 78.8 2219.5 78.8 H2195.9 Q2199 69.5 2207.5 69.5 H2226.5"/>
<path d="M2235.7 65.6 V90.3 H2258.4 V82 Q2258.4 72.9 2249 72.9 H2240.2 V84 Q2240.2 87.6 2243 86 L2250.2 79.2"/>
</g>
<g fill="#d81a1f"><circle cx="2119.8" cy="67.7" r="2.1"/><circle cx="2143.8" cy="67.7" r="2.1"/><circle cx="2156.6" cy="67.9" r="2"/><circle cx="2161" cy="67.9" r="2"/><circle cx="2165.4" cy="67.9" r="2"/><circle cx="2161.6" cy="96.2" r="2"/><circle cx="2165.8" cy="96.2" r="2"/><circle cx="2224.8" cy="96" r="2"/><circle cx="2229.4" cy="96" r="2"/></g>
<g fill="#6a6b70" opacity="0.6">
<rect x="2136" y="103.5" width="12" height="2.2"/><rect x="2151" y="103.5" width="3" height="2.2"/><rect x="2156" y="103" width="16" height="2.5"/><rect x="2175" y="104" width="2" height="2"/><rect x="2179" y="103.5" width="13" height="2.5"/><rect x="2195" y="103.5" width="14" height="2.5"/><rect x="2211" y="103" width="11" height="2.8"/><rect x="2225" y="103.5" width="17" height="2.5"/><rect x="2244" y="103" width="15" height="2.5"/><rect x="2150" y="100.5" width="30" height="1.2"/><rect x="2200" y="100.5" width="40" height="1.2"/>
</g>
</svg>
<div class="a" style="left:34.5px;top:21.5px;width:2332px;height:1556px;border:1.5px solid #cc2630;border-radius:47px"></div>
</body></html>
